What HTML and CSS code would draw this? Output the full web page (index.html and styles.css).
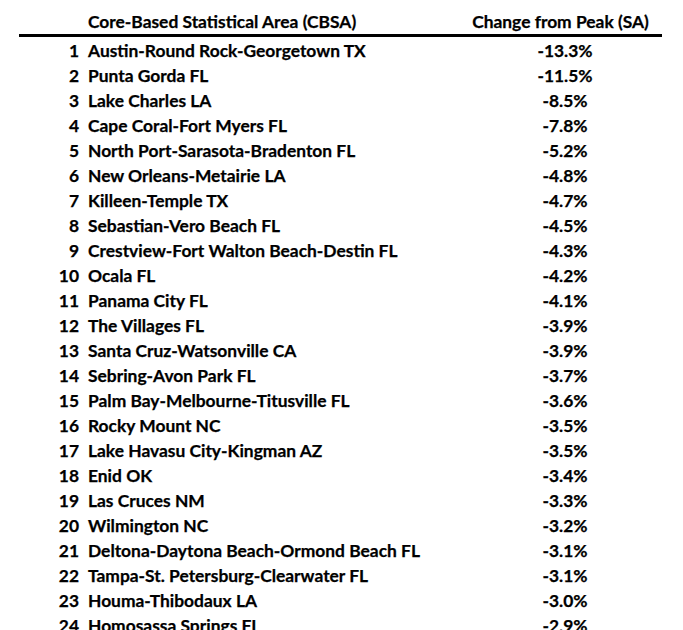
FILE: index.html
```html
<!DOCTYPE html>
<html>
<head>
<meta charset="utf-8">
<link rel="stylesheet" href="styles.css">
</head>
<body>
<div class="wrap">
<table class="cbsa">
<thead>
<tr><th class="num"></th><th class="name">Core-Based Statistical Area (CBSA)</th><th class="chg">Change from Peak (SA)</th></tr>
</thead>
<tbody>
<tr><td class="num">1</td><td class="name">Austin-Round Rock-Georgetown TX</td><td class="chg">-13.3%</td></tr>
<tr><td class="num">2</td><td class="name">Punta Gorda FL</td><td class="chg">-11.5%</td></tr>
<tr><td class="num">3</td><td class="name">Lake Charles LA</td><td class="chg">-8.5%</td></tr>
<tr><td class="num">4</td><td class="name">Cape Coral-Fort Myers FL</td><td class="chg">-7.8%</td></tr>
<tr><td class="num">5</td><td class="name">North Port-Sarasota-Bradenton FL</td><td class="chg">-5.2%</td></tr>
<tr><td class="num">6</td><td class="name">New Orleans-Metairie LA</td><td class="chg">-4.8%</td></tr>
<tr><td class="num">7</td><td class="name">Killeen-Temple TX</td><td class="chg">-4.7%</td></tr>
<tr><td class="num">8</td><td class="name">Sebastian-Vero Beach FL</td><td class="chg">-4.5%</td></tr>
<tr><td class="num">9</td><td class="name">Crestview-Fort Walton Beach-Destin FL</td><td class="chg">-4.3%</td></tr>
<tr><td class="num">10</td><td class="name">Ocala FL</td><td class="chg">-4.2%</td></tr>
<tr><td class="num">11</td><td class="name">Panama City FL</td><td class="chg">-4.1%</td></tr>
<tr><td class="num">12</td><td class="name">The Villages FL</td><td class="chg">-3.9%</td></tr>
<tr><td class="num">13</td><td class="name">Santa Cruz-Watsonville CA</td><td class="chg">-3.9%</td></tr>
<tr><td class="num">14</td><td class="name">Sebring-Avon Park FL</td><td class="chg">-3.7%</td></tr>
<tr><td class="num">15</td><td class="name">Palm Bay-Melbourne-Titusville FL</td><td class="chg">-3.6%</td></tr>
<tr><td class="num">16</td><td class="name">Rocky Mount NC</td><td class="chg">-3.5%</td></tr>
<tr><td class="num">17</td><td class="name">Lake Havasu City-Kingman AZ</td><td class="chg">-3.5%</td></tr>
<tr><td class="num">18</td><td class="name">Enid OK</td><td class="chg">-3.4%</td></tr>
<tr><td class="num">19</td><td class="name">Las Cruces NM</td><td class="chg">-3.3%</td></tr>
<tr><td class="num">20</td><td class="name">Wilmington NC</td><td class="chg">-3.2%</td></tr>
<tr><td class="num">21</td><td class="name">Deltona-Daytona Beach-Ormond Beach FL</td><td class="chg">-3.1%</td></tr>
<tr><td class="num">22</td><td class="name">Tampa-St. Petersburg-Clearwater FL</td><td class="chg">-3.1%</td></tr>
<tr><td class="num">23</td><td class="name">Houma-Thibodaux LA</td><td class="chg">-3.0%</td></tr>
<tr><td class="num">24</td><td class="name">Homosassa Springs FL</td><td class="chg">-2.9%</td></tr>
</tbody>
</table>
</div>
</body>
</html>
```
FILE: styles.css
```css
html, body {
  margin: 0;
  padding: 0;
  background: #ffffff;
}
body {
  font-family: Lato, "Liberation Sans", sans-serif;
  font-weight: 700;
  font-size: 17.4px;
  color: #000000;
  overflow: hidden;
  height: 630px;
}
.wrap {
  padding-left: 19px;
}
.cbsa {
  border-collapse: collapse;
  width: 643px;
  table-layout: fixed;
}
.cbsa th, .cbsa td {
  box-sizing: border-box;
  padding: 0;
  white-space: nowrap;
  font-weight: 700;
  -webkit-text-stroke: 0.25px #000;
}
.cbsa thead th {
  height: 35px;
  vertical-align: bottom;
  line-height: 25px;
  border-bottom: 3px solid #000;
}
.cbsa td {
  height: 25px;
  padding-top: 2px;
  line-height: 23px;
  vertical-align: middle;
}
.cbsa .num {
  width: 60px;
  text-align: right;
}
.cbsa .name {
  width: 391px;
  text-align: left;
  padding-left: 9px;
}
.cbsa .chg {
  width: 192px;
  text-align: center;
}
.cbsa td.chg {
  padding-right: 2px;
}
.cbsa th.chg {
  padding-right: 11px;
}
```
